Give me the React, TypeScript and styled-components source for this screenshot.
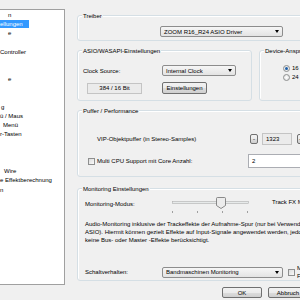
import React from "react";
import styled, { createGlobalStyle } from "styled-components";

const GlobalStyle = createGlobalStyle`
  html, body {
    margin: 0;
    padding: 0;
  }
  body {
    width: 300px;
    height: 300px;
    overflow: hidden;
    background: #f0f0f0;
    font-family: "Liberation Sans", Arial, sans-serif;
    font-size: 6px;
    color: #000;
  }
`;

const Dialog = styled.div`
  display: flex;
  flex-direction: column;
  width: 340px;
  height: 300px;
`;

const Body = styled.div`
  display: flex;
  align-items: flex-start;
`;

const Tree = styled.ul`
  list-style: none;
  margin: 9px 0 0 0;
  padding: 0.4px 0 0 0;
  width: 64px;
  height: 274px;
  background: #fff;
  border: 1px solid #a0a0a0;
  border-left: none;
  overflow: hidden;
  flex-shrink: 0;
`;

const TreeRow = styled.li<{ $indent: number }>`
  height: 9.2px;
  line-height: 9.2px;
  padding-left: ${(p) => p.$indent}px;
  white-space: nowrap;
`;

const TreeText = styled.span<{ $selected?: boolean }>`
  display: inline-block;
  height: 8px;
  line-height: 8px;
  margin-top: 0.6px;
  vertical-align: top;
  padding: ${(p) => (p.$selected ? "0 6px 0 5px" : "0")};
  margin-left: ${(p) => (p.$selected ? "-5px" : "0")};
  background: ${(p) => (p.$selected ? "#3399ff" : "transparent")};
  color: ${(p) => (p.$selected ? "#fff" : "#000")};
`;

const Pane = styled.div`
  display: flex;
  flex-direction: column;
  margin-left: 12px;
  width: 262px;
  flex-shrink: 0;
`;

const Group = styled.div<{ $h: number; $top: number; $w?: number }>`
  position: relative;
  box-sizing: border-box;
  height: ${(p) => p.$h}px;
  width: ${(p) => (p.$w ? `${p.$w}px` : "auto")};
  margin-top: ${(p) => p.$top}px;
  border: 1px solid #d5dfe5;
  border-radius: 3px;
  box-shadow: inset 1px 1px 0 #fff;
`;

const GroupTitle = styled.span`
  position: absolute;
  top: -4px;
  left: 4px;
  padding: 0 1px;
  line-height: 8px;
  background: #f0f0f0;
  white-space: nowrap;
`;

const GroupBody = styled.div<{ $pt: number; $pl: number }>`
  display: flex;
  flex-direction: column;
  padding: ${(p) => p.$pt}px 0 0 ${(p) => p.$pl}px;
`;

const SideBySide = styled.div`
  display: flex;
  margin-top: 9px;
`;

const Row = styled.div<{ $h: number; $top?: number; $align?: string }>`
  display: flex;
  align-items: ${(p) => p.$align || "center"};
  height: ${(p) => p.$h}px;
  margin-top: ${(p) => p.$top || 0}px;
  white-space: nowrap;
`;

const Label = styled.span<{ $w: number; $ml?: number; $mt?: number }>`
  display: block;
  width: ${(p) => p.$w}px;
  margin-left: ${(p) => p.$ml || 0}px;
  margin-top: ${(p) => p.$mt || 0}px;
  line-height: 8px;
  flex-shrink: 0;
  white-space: nowrap;
`;

const Combo = styled.div<{ $w: number }>`
  display: flex;
  align-items: center;
  justify-content: space-between;
  box-sizing: border-box;
  width: ${(p) => p.$w}px;
  height: 11px;
  padding: 0 3px;
  border: 1px solid #8d8d8d;
  border-radius: 2px;
  background: linear-gradient(#f6f6f6, #e3e3e3);
  flex-shrink: 0;
`;

const Arrow = styled.span`
  width: 0;
  height: 0;
  border-left: 2.5px solid transparent;
  border-right: 2.5px solid transparent;
  border-top: 3px solid #000;
`;

const Button = styled.div<{ $w: number; $h: number; $ml?: number }>`
  display: flex;
  align-items: center;
  justify-content: center;
  box-sizing: border-box;
  width: ${(p) => p.$w}px;
  height: ${(p) => p.$h}px;
  margin-left: ${(p) => p.$ml || 0}px;
  border: 1px solid #707070;
  border-radius: 2px;
  background: linear-gradient(#f2f2f2 0%, #ebebeb 50%, #dddddd 51%, #cfcfcf 100%);
  flex-shrink: 0;
`;

const Field = styled.div<{ $w: number; $h: number; $ml?: number; $white?: boolean; $center?: boolean }>`
  display: flex;
  align-items: center;
  justify-content: ${(p) => (p.$center ? "center" : "flex-start")};
  box-sizing: border-box;
  width: ${(p) => p.$w}px;
  height: ${(p) => p.$h}px;
  margin-left: ${(p) => p.$ml || 0}px;
  padding-left: ${(p) => (p.$center ? 0 : 3)}px;
  border: 1px solid ${(p) => (p.$white ? "#abadb3" : "#c4c4c4")};
  background: ${(p) => (p.$white ? "#fff" : "#ebebeb")};
  flex-shrink: 0;
`;

const Check = styled.span<{ $ml?: number }>`
  display: block;
  box-sizing: border-box;
  width: 7px;
  height: 7px;
  margin-left: ${(p) => p.$ml || 0}px;
  border: 1px solid #8e8f8f;
  background: linear-gradient(135deg, #dcdcdc, #fafafa);
  flex-shrink: 0;
`;

const Radio = styled.span<{ $on?: boolean }>`
  position: relative;
  display: block;
  box-sizing: border-box;
  width: 7px;
  height: 7px;
  margin-right: 2px;
  border: 1px solid #8e8f8f;
  border-radius: 50%;
  background: radial-gradient(#ffffff, #dcdcdc);
  flex-shrink: 0;
  &::after {
    content: "";
    display: ${(p) => (p.$on ? "block" : "none")};
    position: absolute;
    left: 1px;
    top: 1px;
    width: 3px;
    height: 3px;
    border-radius: 50%;
    background: #1e5fa8;
  }
`;

const Desc = styled.p`
  margin: 6px 0 0 0;
  line-height: 8.2px;
  white-space: nowrap;
`;

const TwoLine = styled.span`
  display: block;
  margin-left: 2px;
  line-height: 8px;
`;

const Footer = styled.div`
  display: flex;
  margin-top: 6px;
  padding-left: 145px;
`;

const treeRows: { text: string; indent: number; selected?: boolean }[] = [
  { text: "n", indent: 8 },
  { text: "ellungen", indent: 0, selected: true },
  { text: "e", indent: 8 },
  { text: "", indent: 0 },
  { text: "Controller", indent: 0 },
  { text: "", indent: 0 },
  { text: "", indent: 0 },
  { text: "e", indent: 8 },
  { text: "", indent: 0 },
  { text: "", indent: 0 },
  { text: "g", indent: 1 },
  { text: "ü / Maus", indent: 0 },
  { text: "Menü", indent: 3 },
  { text: "r-Tasten", indent: 0 },
  { text: "", indent: 0 },
  { text: "", indent: 0 },
  { text: "", indent: 0 },
  { text: "Wire", indent: 4 },
  { text: "e Effektberechnung", indent: 0 },
  { text: "n", indent: 0 },
];

function Slider() {
  return (
    <svg width="80" height="17" viewBox="0 0 80 17" style={{ flexShrink: 0 }}>
      <rect x="0.5" y="4.5" width="76" height="2" fill="#e7eaea" stroke="#b0b0b0" strokeWidth="0.6" />
      <path d="M45.5 0.5 h7 a1 1 0 0 1 1 1 v7 l-4.5 3 l-4.5 -3 v-7 a1 1 0 0 1 1 -1 z" fill="#ececec" stroke="#707070" strokeWidth="0.8" />
      {[0.5, 25.5, 50.5, 75.5].map((x) => (
        <line key={x} x1={x} y1="14" x2={x} y2="16" stroke="#8a8a8a" strokeWidth="0.8" />
      ))}
    </svg>
  );
}

export default function App() {
  return (
    <Dialog>
      <GlobalStyle />
      <Body>
        <Tree>
          {treeRows.map((r, i) => (
            <TreeRow key={i} $indent={r.indent}>
              {r.text && <TreeText $selected={r.selected}>{r.text}</TreeText>}
            </TreeRow>
          ))}
        </Tree>

        <Pane>
          <Group $h={26} $top={15}>
            <GroupTitle>Treiber</GroupTitle>
            <GroupBody $pt={10} $pl={82}>
              <Combo $w={123}>
                <span>ZOOM R16_R24 ASIO Driver</span>
                <Arrow />
              </Combo>
            </GroupBody>
          </Group>

          <SideBySide>
            <Group $h={51} $top={0} $w={175}>
              <GroupTitle>ASIO/WASAPI-Einstellungen</GroupTitle>
              <GroupBody $pt={14} $pl={5}>
                <Row $h={11}>
                  <Label $w={79}>Clock Source:</Label>
                  <Combo $w={74}>
                    <span>Internal Clock</span>
                    <Arrow />
                  </Combo>
                </Row>
                <Row $h={12} $top={6}>
                  <Field $w={55} $h={11} $ml={4} $center>
                    384 / 16 Bit
                  </Field>
                  <Button $w={45} $h={12} $ml={20}>
                    Einstellungen
                  </Button>
                </Row>
              </GroupBody>
            </Group>
            <Group $h={51} $top={0} $w={80} style={{ marginLeft: 7 }}>
              <GroupTitle>Device-Ansprache</GroupTitle>
              <GroupBody $pt={12.5} $pl={23}>
                <Row $h={9}>
                  <Radio $on />
                  <span>16 Bit</span>
                </Row>
                <Row $h={9}>
                  <Radio />
                  <span>24 Bit</span>
                </Row>
              </GroupBody>
            </Group>
          </SideBySide>

          <Group $h={67} $top={9}>
            <GroupTitle>Puffer / Performance</GroupTitle>
            <GroupBody $pt={22} $pl={0}>
              <Row $h={12}>
                <Label $w={153} $ml={19}>
                  VIP-Objektpuffer (in Stereo-Samples)
                </Label>
                <Button $w={8} $h={10}>-</Button>
                <Field $w={30} $h={12} $ml={4}>
                  1323
                </Field>
                <Button $w={8} $h={10} $ml={5}>+</Button>
              </Row>
              <Row $h={14} $top={9}>
                <Check $ml={10} />
                <Label $w={151} $ml={2}>
                  Multi CPU Support mit Core Anzahl:
                </Label>
                <Field $w={62} $h={14} $white>
                  2
                </Field>
              </Row>
            </GroupBody>
          </Group>

          <Group $h={93} $top={11}>
            <GroupTitle>Monitoring Einstellungen</GroupTitle>
            <GroupBody $pt={8} $pl={7}>
              <Row $h={17} $align="flex-start">
                <Label $w={87} $mt={3}>
                  Monitoring-Modus:
                </Label>
                <Slider />
                <Label $w={60} $ml={20} $mt={1}>
                  Track FX Monitoring
                </Label>
              </Row>
              <Desc>
                Audio-Monitoring inklusive der Trackeffekte der Aufnahme-Spur (nur bei Verwendung von
                <br />
                ASIO). Hiermit können gezielt Effekte auf Input-Signale angewendet werden, jedoch werden
                <br />
                keine Bus- oder Master -Effekte berücksichtigt.
              </Desc>
              <Row $h={11} $top={22}>
                <Label $w={77}>Schaltverhalten:</Label>
                <Combo $w={121}>
                  <span>Bandmaschinen Monitoring</span>
                  <Arrow />
                </Combo>
                <Check $ml={5} />
                <TwoLine>
                  Manuell
                  <br />
                  FX
                </TwoLine>
              </Row>
            </GroupBody>
          </Group>

          <Footer>
            <Button $w={40} $h={11}>OK</Button>
            <Button $w={40} $h={11} $ml={6}>Abbruch</Button>
          </Footer>
        </Pane>
      </Body>
    </Dialog>
  );
}
